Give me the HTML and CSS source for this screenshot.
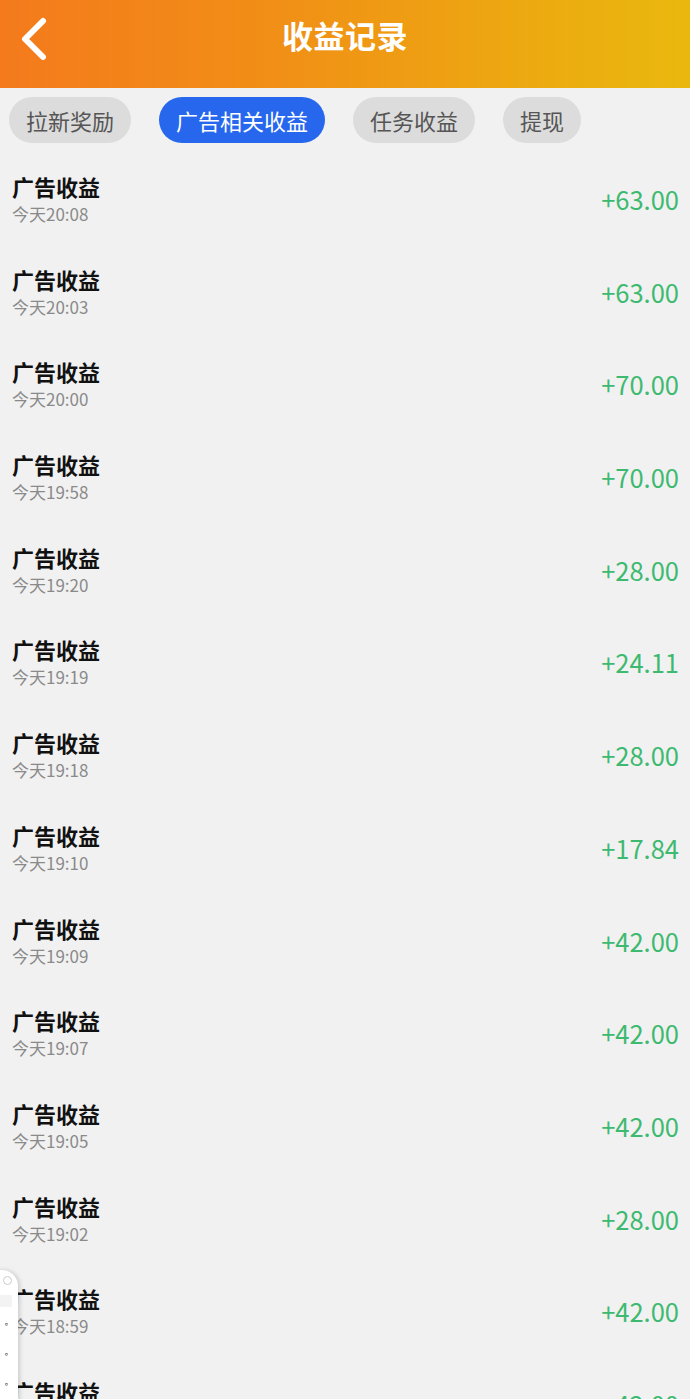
FILE: index.html
```html
<!DOCTYPE html>
<html lang="zh-CN">
<head>
<meta charset="utf-8">
<title>收益记录</title>
<link rel="stylesheet" href="styles.css">
</head>
<body>
<header class="topbar">
  <svg class="back" width="30" height="44" viewBox="0 0 30 44"><path d="M24 4 L6 22 L24 40" fill="none" stroke="#fff" stroke-width="6" stroke-linecap="round" stroke-linejoin="round"/></svg>
  <h1 class="title">收益记录</h1>
</header>
<nav class="tabs">
  <span class="tab">拉新奖励</span>
  <span class="tab active">广告相关收益</span>
  <span class="tab">任务收益</span>
  <span class="tab">提现</span>
</nav>
<ul class="list">
  <li class="row"><div class="info"><div class="name">广告收益</div><div class="time">今天20:08</div></div><div class="amt">+63.00</div></li>
  <li class="row"><div class="info"><div class="name">广告收益</div><div class="time">今天20:03</div></div><div class="amt">+63.00</div></li>
  <li class="row"><div class="info"><div class="name">广告收益</div><div class="time">今天20:00</div></div><div class="amt">+70.00</div></li>
  <li class="row"><div class="info"><div class="name">广告收益</div><div class="time">今天19:58</div></div><div class="amt">+70.00</div></li>
  <li class="row"><div class="info"><div class="name">广告收益</div><div class="time">今天19:20</div></div><div class="amt">+28.00</div></li>
  <li class="row"><div class="info"><div class="name">广告收益</div><div class="time">今天19:19</div></div><div class="amt">+24.11</div></li>
  <li class="row"><div class="info"><div class="name">广告收益</div><div class="time">今天19:18</div></div><div class="amt">+28.00</div></li>
  <li class="row"><div class="info"><div class="name">广告收益</div><div class="time">今天19:10</div></div><div class="amt">+17.84</div></li>
  <li class="row"><div class="info"><div class="name">广告收益</div><div class="time">今天19:09</div></div><div class="amt">+42.00</div></li>
  <li class="row"><div class="info"><div class="name">广告收益</div><div class="time">今天19:07</div></div><div class="amt">+42.00</div></li>
  <li class="row"><div class="info"><div class="name">广告收益</div><div class="time">今天19:05</div></div><div class="amt">+42.00</div></li>
  <li class="row"><div class="info"><div class="name">广告收益</div><div class="time">今天19:02</div></div><div class="amt">+28.00</div></li>
  <li class="row"><div class="info"><div class="name">广告收益</div><div class="time">今天18:59</div></div><div class="amt">+42.00</div></li>
  <li class="row"><div class="info"><div class="name">广告收益</div><div class="time">今天18:58</div></div><div class="amt">+42.00</div></li>
</ul>
<aside class="float-panel">
  <span class="fp-dot top"></span>
  <span class="fp-bar"></span>
  <span class="fp-dot">°</span>
  <span class="fp-dot">°</span>
  <span class="fp-dot">°</span>
</aside>
</body>
</html>
```

FILE: styles.css
```css
* { box-sizing: border-box; margin: 0; padding: 0; }
html, body { background: #f1f1f1; }
body {
  font-family: "Noto Sans CJK SC", "Noto Sans", sans-serif;
  width: 690px;
  height: 1399px;
  overflow: hidden;
  position: relative;
}
.topbar {
  height: 88px;
  background: linear-gradient(90deg, #f47a1c 0%, #f18f16 40%, #ecac10 80%, #e9b80e 100%);
  display: flex;
  align-items: center;
  justify-content: center;
  position: relative;
}
.back {
  position: absolute;
  left: 19px;
  top: 17px;
}
.title {
  color: #fff;
  font-size: 31px;
  font-weight: 700;
  line-height: 40px;
  margin-top: -18px;
  letter-spacing: 0.5px;
}
.tabs {
  display: flex;
  gap: 28px;
  padding: 9px 9px 12px;
}
.tab {
  height: 46px;
  line-height: 46px;
  padding: 0 17px;
  border-radius: 23px;
  background: #dcdcdc;
  color: #555;
  font-size: 22px;
  white-space: nowrap;
}
.tab.active {
  background: #2667ee;
  color: #fff;
}
.list { list-style: none; }
.row {
  height: 92.7px;
  display: flex;
  align-items: flex-start;
  justify-content: space-between;
  padding: 17px 11px 0 12px;
}
.info { display: flex; flex-direction: column; }
.name {
  font-size: 22px;
  font-weight: 700;
  color: #111;
  line-height: 28px;
}
.time {
  font-size: 17px;
  color: #8a8a8a;
  line-height: 22px;
  margin-top: 3px;
}
.amt {
  font-size: 25.5px;
  color: #3dba70;
  line-height: 30px;
  margin-top: 12px;
}
.float-panel {
  position: absolute;
  left: -20px;
  top: 1270px;
  width: 38px;
  height: 140px;
  background: #fff;
  border-radius: 0 16px 0 0;
  box-shadow: 2px 0 4px rgba(0,0,0,0.15);
  display: flex;
  flex-direction: column;
  align-items: flex-end;
  padding: 6px 6px 0 0;
  gap: 10px;
  font-size: 9px;
  color: #444;
}
.fp-dot.top {
  width: 9px; height: 9px;
  border: 1px solid #ccc;
  border-radius: 50%;
}
.fp-bar {
  width: 20px; height: 12px;
  background: #f3f3f3;
}
.fp-dot { line-height: 20px; padding-right: 4px; }
```
